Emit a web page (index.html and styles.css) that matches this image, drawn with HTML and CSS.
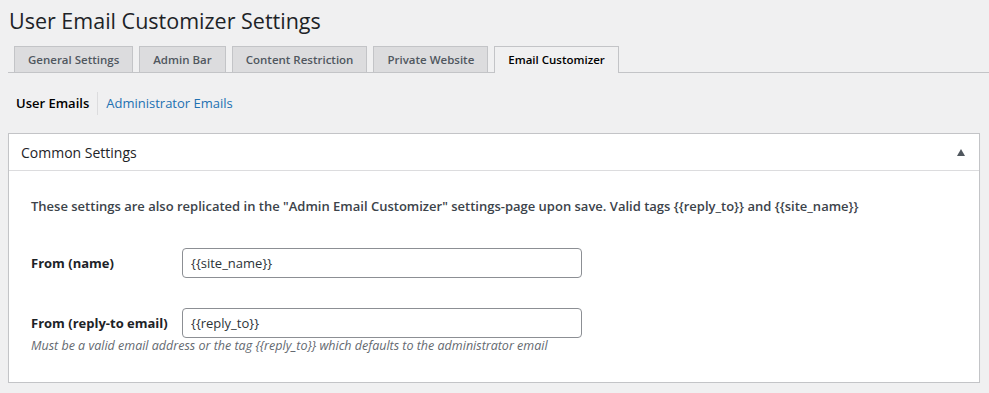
FILE: index.html
```html
<!DOCTYPE html>
<html lang="en">
<head>
    <meta charset="UTF-8">
    <meta name="viewport" content="width=device-width, initial-scale=1.0">
    <title>User Email Customizer Settings</title>
    <link rel="stylesheet" href="styles.css">
</head>
<body>
    <div class="wrap">
        <h1>User Email Customizer Settings</h1>

        <nav class="nav-tabs">
            <a class="nav-tab" href="#">General Settings</a>
            <a class="nav-tab" href="#">Admin Bar</a>
            <a class="nav-tab" href="#">Content Restriction</a>
            <a class="nav-tab" href="#">Private Website</a>
            <a class="nav-tab nav-tab-active" href="#">Email Customizer</a>
        </nav>

        <ul class="subsubsub">
            <li class="current">User Emails</li>
            <li><a href="#">Administrator Emails</a></li>
        </ul>

        <div class="postbox">
            <div class="postbox-header">
                <h2>Common Settings</h2>
                <span class="toggle-indicator"></span>
            </div>
            <div class="inside">
                <p class="intro">These settings are also replicated in the "Admin Email Customizer" settings-page upon save. Valid tags {{reply_to}} and {{site_name}}</p>

                <div class="form-row">
                    <label for="from-name">From (name)</label>
                    <input type="text" id="from-name" value="{{site_name}}">
                </div>

                <div class="form-row form-row-last">
                    <label for="from-email">From (reply-to email)</label>
                    <input type="text" id="from-email" value="{{reply_to}}">
                </div>
                <p class="description">Must be a valid email address or the tag {{reply_to}} which defaults to the administrator email</p>
            </div>
        </div>
    </div>
</body>
</html>
```

FILE: styles.css
```css
:root {
    --bg-color: #f0f0f1;
    --border-color: #c3c4c7;
    --text-color: #1d2327;
    --muted-color: #3c434a;
    --link-color: #2271b1;
}

body {
    margin: 0;
    background-color: var(--bg-color);
    color: var(--muted-color);
    font-family: "Open Sans", "Noto Sans", sans-serif;
    font-size: 13px;
}

.wrap {
    padding: 0 9px 0 8px;
}

h1 {
    margin: 0;
    padding: 6px 0 0 1px;
    height: 33px;
    font-size: 21.5px;
    font-weight: 400;
    color: var(--text-color);
    line-height: 29px;
}

/* Tabs */
.nav-tabs {
    display: flex;
    gap: 6px;
    padding: 7px 0 0 6px;
    border-bottom: 1px solid var(--border-color);
    margin-right: -9px;
}

.nav-tab {
    display: block;
    height: 25px;
    padding: 0 13px;
    line-height: 26px;
    font-size: 11.5px;
    font-weight: 600;
    color: #50575e;
    text-decoration: none;
    background-color: #dcdcde;
    border: 1px solid var(--border-color);
    border-bottom: none;
}

.nav-tab-active {
    background-color: var(--bg-color);
    color: #000;
    margin-bottom: -1px;
    height: 26px;
}

/* Sub navigation */
.subsubsub {
    display: flex;
    list-style: none;
    margin: 0;
    padding: 0;
    height: 60px;
    align-items: center;
    font-size: 13px;
}

.subsubsub li {
    padding: 0 8px;
    line-height: 23px;
}

.subsubsub li + li {
    border-left: 1px solid #dcdcde;
}

.subsubsub .current {
    font-weight: 600;
    color: #000;
}

.subsubsub a {
    color: var(--link-color);
    text-decoration: none;
}

/* Postbox */
.postbox {
    background-color: #fff;
    border: 1px solid var(--border-color);
    box-shadow: 0 1px 1px rgba(0, 0, 0, 0.04);
}

.postbox-header {
    display: flex;
    align-items: center;
    justify-content: space-between;
    height: 36px;
    padding: 0 12px;
    border-bottom: 1px solid #dcdcde;
}

.postbox-header h2 {
    margin: 0;
    font-size: 14px;
    font-weight: 400;
    color: var(--text-color);
}

.toggle-indicator {
    width: 0;
    height: 0;
    margin-right: 2px;
    border-left: 4px solid transparent;
    border-right: 4px solid transparent;
    border-bottom: 7px solid #50575e;
}

.inside {
    padding: 25px 22px 28px;
}

.intro {
    margin: 0 0 32px;
    font-weight: 600;
    line-height: 20px;
}

.form-row {
    display: flex;
    align-items: center;
    margin-bottom: 30px;
}

.form-row-last {
    margin-bottom: 0;
}

.form-row label {
    width: 151px;
    font-weight: 700;
    color: var(--text-color);
}

.form-row input {
    box-sizing: border-box;
    width: 400px;
    height: 30px;
    padding: 0 8px;
    border: 1px solid #8c8f94;
    border-radius: 4px;
    font-family: inherit;
    font-size: 13px;
    color: #2c3338;
    background-color: #fff;
}

.description {
    margin: 0;
    font-size: 12.5px;
    font-style: italic;
    color: #646970;
    line-height: 16px;
}
```
